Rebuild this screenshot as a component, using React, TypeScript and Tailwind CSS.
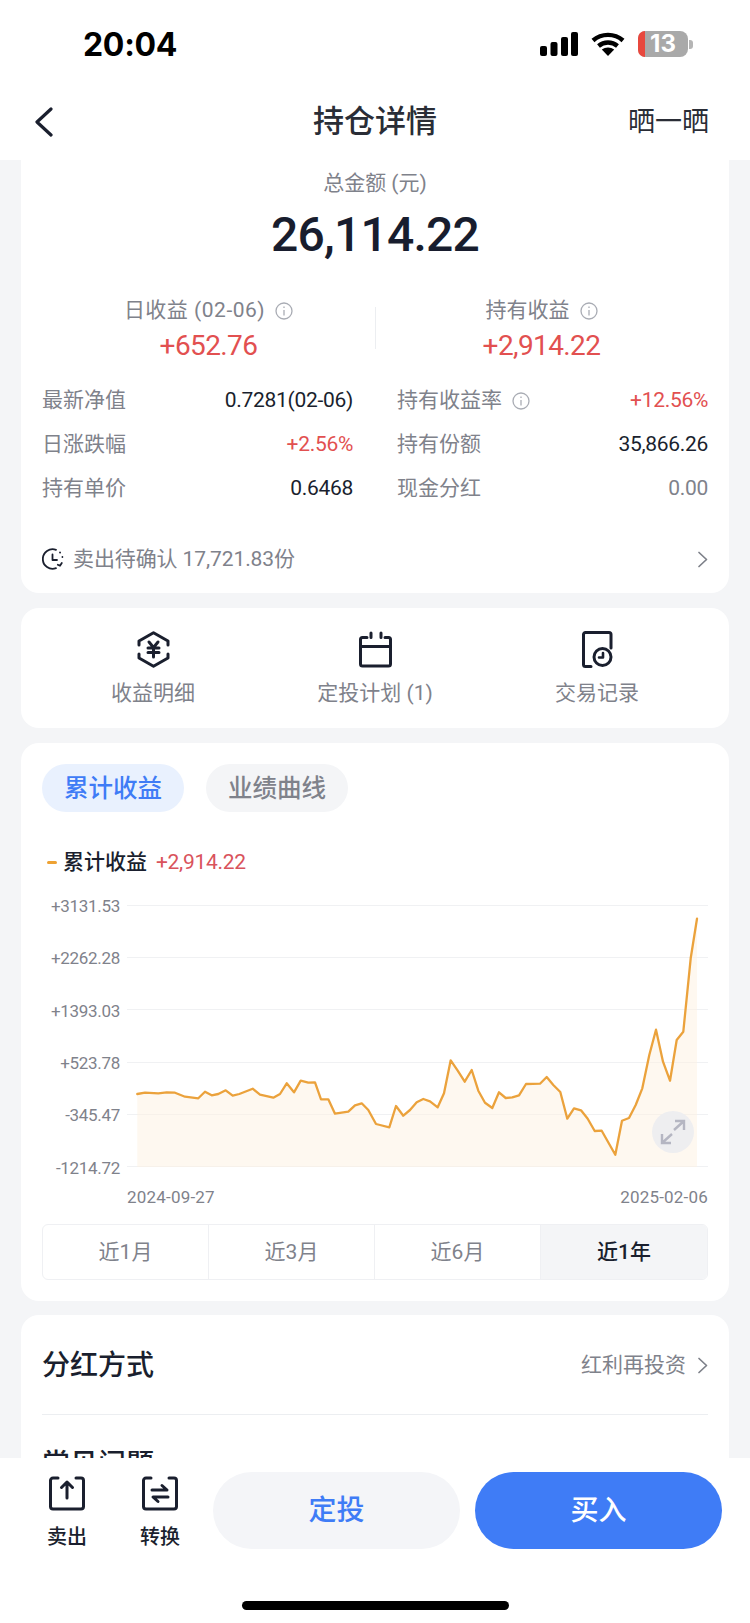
import React from "react";

const leftPts: [number, number][] = [[352,762],[375,758],[415,760],[440,757],[465,758],[495,770],[535,775],[555,755],[575,766],[595,762],[617,751],[638,767],[658,762],[698,746],[720,764],[760,773],[780,762],[800,730],[822,757],[842,722],[865,728],[885,727],[903,778],[925,778],[945,821],[985,815],[1005,796],[1025,790],[1045,810],[1068,852]];
const rightPts: [number, number][] = [[0,735],[28,742],[48,678],[70,707],[90,690],[110,667],[130,657],[150,664],[173,682],[192,640],[212,541],[233,572],[254,605],[275,570],[295,632],[315,668],[337,684],[357,637],[377,654],[397,652],[417,646],[438,612],[480,611],[500,591],[520,615],[541,636],[562,716],[582,685],[603,691],[623,716],[644,753],[665,752],[706,824],[726,722],[747,714],[767,675],[787,625],[808,525],[828,449],[849,545],[870,602],[890,480],[910,455],[932,235],[951,116]];
const pts = [
  ...leftPts.map(([x, y]) => [20 + x / 3, 840 + y / 3]),
  ...rightPts.map(([x, y]) => [380 + x / 3, 880 + y / 3]),
];
const line = pts.map(([x, y]) => `${x.toFixed(1)},${y.toFixed(1)}`).join(" ");
const area = `${pts[0][0].toFixed(1)},1167 ${line} ${pts[pts.length - 1][0].toFixed(1)},1167`;

const Info = () => (
  <svg width="18" height="18" viewBox="0 0 18 18" fill="none" stroke="#a9acb4" strokeWidth="1.3" className="shrink-0">
    <circle cx="9" cy="9" r="8" />
    <path d="M9 8v5.5" />
    <path d="M9 4.500v1.500" />
  </svg>
);

const Chevron = () => (
  <svg width="11" height="17" viewBox="0 0 11 17" fill="none" stroke="#7d8089" strokeWidth="1.7" strokeLinecap="round" strokeLinejoin="round">
    <path d="M2 1.500l7.500 7-7.500 7" />
  </svg>
);

const Cell = ({ label, value, info, color = "text-[#1a1f2e]" }: { label: string; value: string; info?: boolean; color?: string }) => (
  <div className="flex h-[44px] items-center justify-between pt-[2px]">
    <div className="flex items-center gap-[10px] text-[21px] text-[#7f828b]">
      <span>{label}</span>
      {info && <Info />}
    </div>
    <span className={`text-[21px] tracking-[-0.3px] ${color}`}>{value}</span>
  </div>
);

const Action = ({ icon, label }: { icon: React.ReactNode; label: string }) => (
  <div className="flex flex-col items-center">
    <div className="flex h-[37px] items-center justify-center">{icon}</div>
    <span className="mt-[12px] text-[21px] leading-[26px] text-[#7f828b]">{label}</span>
  </div>
);

const yLabels = ["+3131.53", "+2262.28", "+1393.03", "+523.78", "-345.47", "-1214.72"];

export default function App() {
  return (
    <div className="flex h-[1623px] w-[750px] flex-col overflow-hidden bg-[#f4f5f7] font-['Roboto','Noto_Sans_CJK_SC',sans-serif]">
      <div className="h-[160px] shrink-0 bg-white">
        <div className="flex h-[90px] items-start justify-between pl-[83px] pr-[57px] pt-[28px]">
          <span className="font-['Inter',sans-serif] text-[32px] font-bold leading-[34px] tracking-[-0.3px] text-black">20:04</span>
          <div className="flex items-center pt-[3px]">
            <svg width="38" height="24" viewBox="0 0 38 24" fill="black">
              <rect x="0" y="14" width="7" height="10" rx="2" />
              <rect x="10.500" y="10" width="7" height="14" rx="2" />
              <rect x="21" y="5" width="7" height="19" rx="2" />
              <rect x="31" y="0" width="7" height="24" rx="2" />
            </svg>
            <svg width="34" height="24" viewBox="0 0 34 24" className="ml-[13px]" fill="none" stroke="black" strokeWidth="4.400">
              <path d="M2 8.500C10.500 1 23.500 1 32 8.500" />
              <path d="M7.500 14c5.500-4.600 13.500-4.600 19 0" />
              <path d="M17 24l-6.200-6.400c3.600-2.800 8.800-2.800 12.400 0z" fill="black" stroke="none" />
            </svg>
            <div className="relative ml-[13px] flex h-[26px] w-[50px] items-center justify-center rounded-[8px] bg-[#a9a9a9] font-['Inter',sans-serif] text-[24px] font-bold leading-[26px] text-white">
              <span className="absolute inset-y-0 left-0 w-[7px] rounded-l-[8px] bg-[#e8483e]" />
              <span className="relative">13</span>
            </div>
            <span className="ml-[1px] h-[9px] w-[4px] rounded-r-[3px] bg-[#b5b5b5]" />
          </div>
        </div>
        <div className="flex h-[70px] items-center justify-between pl-[34px] pr-[41px] pb-[7px]">
          <svg width="20" height="30" viewBox="0 0 20 30" fill="none" stroke="#1a1f2e" strokeWidth="3.200" strokeLinecap="round" strokeLinejoin="round">
            <path d="M17 2L3 15l14 13" />
          </svg>
          <span className="ml-[68px] text-[31px] font-medium leading-[40px] text-[#2a2d36]">持仓详情</span>
          <span className="text-[27px] leading-[40px] text-[#2a2d36]">晒一晒</span>
        </div>
      </div>

      <div className="flex-1 overflow-hidden px-[21px]">
        <div className="rounded-b-[18px] bg-white px-[21px]">
          <div className="flex h-[46px] items-center justify-center pt-[2px] text-[21px] text-[#7f828b]">总金额 (元)</div>
          <div className="flex h-[52px] items-center justify-center pt-[6px] text-[48px] font-medium leading-[50px] tracking-[-0.8px] text-[#181d2e]">26,114.22</div>
          <div className="relative grid grid-cols-2 pt-[40px]">
            <div className="flex flex-col items-center">
              <div className="flex h-[24px] items-center gap-[10px] pt-[2px] text-[21px] text-[#7f828b]">
                <span className="tracking-[0.500px]">日收益 (02-06)</span>
                <Info />
              </div>
              <div className="mt-[3px] flex h-[40px] items-center pt-[2px] text-[28px] tracking-[-0.600px] text-[#e25050]">+652.76</div>
            </div>
            <div className="flex flex-col items-center">
              <div className="flex h-[24px] items-center gap-[10px] pt-[2px] text-[21px] text-[#7f828b]">
                <span>持有收益</span>
                <Info />
              </div>
              <div className="mt-[3px] flex h-[40px] items-center pt-[2px] text-[28px] tracking-[-0.600px] text-[#e25050]">+2,914.22</div>
            </div>
            <span className="absolute bottom-[16px] left-1/2 h-[42px] w-[1px] bg-[#eceef1]" />
          </div>
          <div className="grid grid-cols-2 gap-x-[44px] pt-[13px]">
            <Cell label="最新净值" value="0.7281(02-06)" />
            <Cell label="持有收益率" value="+12.56%" info color="text-[#e25050]" />
            <Cell label="日涨跌幅" value="+2.56%" color="text-[#e25050]" />
            <Cell label="持有份额" value="35,866.26" />
            <Cell label="持有单价" value="0.6468" />
            <Cell label="现金分红" value="0.00" color="text-[#7f828b]" />
          </div>
          <div className="pt-[19px]">
            <div className="flex h-[64px] items-center justify-between pb-[4px]">
              <div className="flex items-center gap-[9px]">
                <svg width="22" height="22" viewBox="0 0 22 22" fill="none" stroke="#1a1f2e" strokeWidth="1.800" strokeLinecap="round" strokeLinejoin="round">
                  <path d="M14 20.200A9.800 9.800 0 1 1 14 1.800" />
                  <path d="M10.500 6.500V12h4.500" />
                  <path d="M18 4.500l.1.1M20.400 9v.1M19.800 15l-1.800 2.800-2.200-1" />
                </svg>
                <span className="pt-[2px] text-[21px] tracking-[-0.100px] text-[#7f828b]">卖出待确认 17,721.83份</span>
              </div>
              <Chevron />
            </div>
          </div>
        </div>

        <div className="mt-[15px] grid h-[120px] grid-cols-3 rounded-[18px] bg-white px-[21px] pt-[23px]">
          <Action
            label="收益明细"
            icon={
              <svg width="33" height="37" viewBox="0 0 33 37" fill="none" stroke="#1a1f2e" strokeWidth="3" strokeLinecap="round" strokeLinejoin="round">
                <path d="M2 14v-4L16.500 1.700 31 10v4" />
                <path d="M31 23v4l-14.500 8.300L2 27v-4" />
                <path d="M12 11l4.500 5.500L21 11M11 17h11M11 21.500h11M16.500 17v9" strokeWidth="3" />
              </svg>
            }
          />
          <Action
            label="定投计划 (1)"
            icon={
              <svg width="33" height="37" viewBox="0 0 33 37" fill="none" stroke="#1a1f2e" strokeWidth="3" strokeLinecap="round" strokeLinejoin="round">
                <path d="M8 6.500H3.500A2 2 0 0 0 1.500 8.500V33a2 2 0 0 0 2 2h26a2 2 0 0 0 2-2V8.500a2 2 0 0 0-2-2H26" />
                <path d="M1.500 15.500h30" />
                <path d="M12 2v4.500M22 2v4.500" />
              </svg>
            }
          />
          <Action
            label="交易记录"
            icon={
              <svg width="31" height="37" viewBox="0 0 31 37" fill="none" stroke="#1a1f2e" strokeWidth="3" strokeLinecap="round" strokeLinejoin="round">
                <path d="M29 17V3.500a2 2 0 0 0-2-2H3.500a2 2 0 0 0-2 2V33.500a2 2 0 0 0 2 2H9" />
                <circle cx="20.500" cy="26" r="8.500" />
                <path d="M21 22v4.500h-4" strokeWidth="2.600" />
              </svg>
            }
          />
        </div>

        <div className="mt-[15px] h-[558px] rounded-[18px] bg-white px-[21px] pt-[21px]">
          <div className="flex gap-[22px]">
            <div className="flex h-[48px] w-[142px] items-center justify-center rounded-full bg-[#e9f1fe] pt-[2px] text-[24.500px] font-medium text-[#3f7cf6]">累计收益</div>
            <div className="flex h-[48px] w-[142px] items-center justify-center rounded-full bg-[#f4f5f7] pt-[2px] text-[24.500px] font-medium text-[#7f828b]">业绩曲线</div>
          </div>
          <div className="mt-[36px] flex h-[28px] items-center pl-[5px]">
            <span className="h-[3px] w-[10px] rounded-full bg-[#eea233]" />
            <span className="ml-[6px] pt-[2px] text-[21px] font-medium text-[#1a1f2e]">累计收益</span>
            <span className="ml-[9px] pt-[2px] text-[21px] tracking-[-0.300px] text-[#d9535c]">+2,914.22</span>
          </div>
          <div className="relative mt-[17px] flex h-[286px] flex-col justify-between">
            {yLabels.map((l) => (
              <div key={l} className="flex h-[24px] items-center">
                <span className="w-[78px] pt-[3px] text-right text-[17px] tracking-[-0.300px] text-[#7f828b]">{l}</span>
                <span className="ml-[7px] h-[1px] flex-1 bg-[#f0f1f3]" />
              </div>
            ))}
            <svg className="absolute left-0 top-0" width="666" height="286" viewBox="42 893 666 286" fill="none">
              <polygon points={area} fill="#fdf2e2" fillOpacity="0.5" />
              <polyline points={line} stroke="#eba23c" strokeWidth="2.300" strokeLinejoin="round" strokeLinecap="round" />
            </svg>
            <div className="absolute left-[610px] top-[218px] flex h-[42px] w-[42px] items-center justify-center rounded-full bg-[#eeeef0]">
              <svg width="26" height="26" viewBox="0 0 26 26" fill="none" stroke="#b5b6c2" strokeWidth="2.400">
                <path d="M15 2h9v9M24 2L14 11" />
                <path d="M11 24H2v-9M2 24l10-9" />
              </svg>
            </div>
          </div>
          <div className="mt-[6px] flex h-[24px] items-center justify-between pl-[85px] pt-[2px] text-[17px] tracking-[0.200px] text-[#7f828b]">
            <span>2024-09-27</span>
            <span>2025-02-06</span>
          </div>
          <div className="mt-[15px] grid h-[56px] grid-cols-4 overflow-hidden rounded-[6px] border border-[#eff0f3] text-[21px] text-[#7f828b]">
            <div className="flex items-center justify-center border-r border-[#eff0f3] pt-[2px]">近1月</div>
            <div className="flex items-center justify-center border-r border-[#eff0f3] pt-[2px]">近3月</div>
            <div className="flex items-center justify-center border-r border-[#eff0f3] pt-[2px]">近6月</div>
            <div className="flex items-center justify-center bg-[#f4f5f7] pt-[2px] font-medium text-[#1a1f2e]">近1年</div>
          </div>
        </div>

        <div className="mt-[14px] rounded-t-[18px] bg-white px-[21px]">
          <div className="flex h-[100px] items-center justify-between border-b border-[#eceef1] pt-[2px]">
            <span className="text-[28px] font-medium text-[#1a1f2e]">分红方式</span>
            <div className="flex items-center gap-[11px]">
              <span className="text-[21px] text-[#7f828b]">红利再投资</span>
              <Chevron />
            </div>
          </div>
          <div className="flex h-[100px] items-center">
            <span className="text-[28px] font-medium text-[#1a1f2e]">常见问题</span>
          </div>
        </div>
      </div>

      <div className="flex h-[165px] shrink-0 flex-col bg-white pl-[32px] pr-[28px] pt-[14px]">
        <div className="flex">
          <div className="flex w-[70px] flex-col items-center pt-[4px]">
            <svg width="36" height="35" viewBox="0 0 36 35" fill="none" stroke="#1a1f2e" strokeWidth="3" strokeLinecap="round" strokeLinejoin="round">
              <path d="M9 2H4a2.500 2.500 0 0 0-2.500 2.500V30.500A2.500 2.500 0 0 0 4 33h28a2.500 2.500 0 0 0 2.500-2.500V4.500A2.500 2.500 0 0 0 32 2h-5" />
              <path d="M18 22V6M12.500 11.500L18 6l5.500 5.500" />
            </svg>
            <span className="mt-[13px] text-[20px] font-medium leading-[26px] text-[#1a1f2e]">卖出</span>
          </div>
          <div className="ml-[23px] flex w-[70px] flex-col items-center pt-[4px]">
            <svg width="36" height="35" viewBox="0 0 36 35" fill="none" stroke="#1a1f2e" strokeWidth="3" strokeLinecap="round" strokeLinejoin="round">
              <path d="M9 2H4a2.500 2.500 0 0 0-2.500 2.500V30.500A2.500 2.500 0 0 0 4 33h28a2.500 2.500 0 0 0 2.500-2.500V4.500A2.500 2.500 0 0 0 32 2h-5" />
              <path d="M10 14h15l-5-4.500M26 21H11l5 4.500" />
            </svg>
            <span className="mt-[13px] text-[20px] font-medium leading-[26px] text-[#1a1f2e]">转换</span>
          </div>
          <div className="ml-[18px] flex h-[77px] w-[247px] items-center justify-center rounded-full bg-[#f4f5f8] text-[28px] font-medium text-[#3f7cf6]">定投</div>
          <div className="ml-[15px] flex h-[77px] w-[247px] items-center justify-center rounded-full bg-[#3f7cf6] text-[28px] font-medium text-white">买入</div>
        </div>
        <div className="ml-[210px] mt-[51px] h-[9px] w-[267px] rounded-full bg-black" />
      </div>
    </div>
  );
}
